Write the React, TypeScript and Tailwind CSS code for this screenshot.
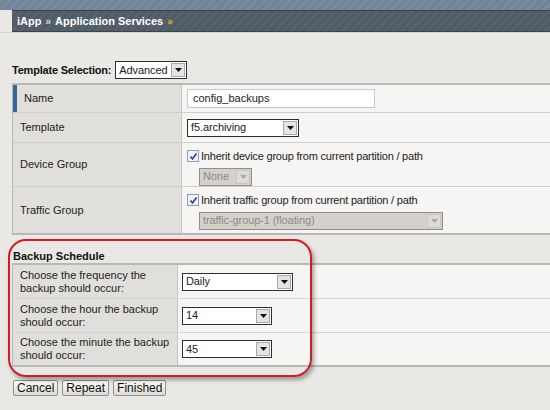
import React from "react";

const font = { fontFamily: '"Liberation Sans", Arial, sans-serif' };

function Arrow({ disabled }: { disabled?: boolean }) {
  return (
    <svg width="7" height="4" viewBox="0 0 7 4">
      <polygon points="0,0 7,0 3.5,4" fill={disabled ? "#a8a8a8" : "#111"} />
    </svg>
  );
}

function Select({
  value,
  w,
  disabled,
}: {
  value: string;
  w: string;
  disabled?: boolean;
}) {
  return (
    <div
      className={`flex h-[18px] items-stretch border ${
        disabled
          ? "border-[#8e8e8e] bg-[#d4d1cb] text-[#8a8a8a]"
          : "border-[#2e2e2e] bg-white text-[#222]"
      } ${w}`}
    >
      <div className="flex flex-1 items-center pl-[3px] text-[11px] leading-none tracking-[-0.1px]">
        {value}
      </div>
      <div
        className={`m-px flex w-[14px] items-center justify-center border ${
          disabled
            ? "border-[#c8c6c0] bg-[#dedbd5]"
            : "border-[#a8a8a8] bg-[#e4e4e4]"
        }`}
      >
        <Arrow disabled={disabled} />
      </div>
    </div>
  );
}

function Check({ label }: { label: string }) {
  return (
    <div className="flex items-center gap-[2px] text-[11px] tracking-[-0.2px] text-[#222]">
      <div className="flex h-[12px] w-[12px] items-center justify-center border border-[#8d9fb5] bg-[#eef1f6]">
        <svg width="9" height="9" viewBox="0 0 9 9">
          <path d="M1.5 4.5 L3.5 7 L7.5 1.5" stroke="#2a3f9a" strokeWidth="1.6" fill="none" />
        </svg>
      </div>
      <span>{label}</span>
    </div>
  );
}

function Btn({ label }: { label: string }) {
  return (
    <div className="flex h-[16px] items-center rounded-[2px] border border-[#8f8f8f] bg-gradient-to-b from-[#fbfbfa] to-[#dcdbd6] px-[3px] text-[12px] leading-none text-[#111]">
      {label}
    </div>
  );
}

export default function App() {
  return (
    <div className="relative h-[410px] w-[550px] overflow-hidden bg-[#e9e8e4]" style={font}>
      {/* header */}
      <div className="h-[10px] bg-[#76869a] bg-[repeating-linear-gradient(135deg,#7a8a9e_0px,#7a8a9e_3px,#72829a_3px,#72829a_6px)]" />
      <div className="ml-[12px] flex h-[22px] items-center gap-[4px] border-y border-[#3b434b] bg-[#535e6b] bg-[repeating-linear-gradient(135deg,#56616e_0px,#56616e_3px,#505b68_3px,#505b68_6px)] pl-[5px] text-[11px] font-bold text-white">
        <span>iApp</span>
        <span className="text-[10px] text-[#d8dce0]">»</span>
        <span>Application Services</span>
        <span className="text-[10px] text-[#e0b000]">»</span>
      </div>
      <div className="h-px bg-[#d4d2cc]" />

      {/* template selection */}
      <div className="mt-[28px] flex items-center gap-[4px] pl-[12px]">
        <span className="text-[11px] font-bold tracking-[-0.2px] text-[#111]">Template Selection:</span>
        <Select value="Advanced" w="w-[72px]" />
      </div>

      {/* main table */}
      <div className="ml-[12px] mt-[4px] border-y-2 border-l border-[#b8b8b5]">
        <div className="flex h-[28px] border-b border-[#cfcecb]">
          <div className="flex w-[168px] items-center border-l-[4px] border-[#37669c] bg-[#e0dfdb] pl-[7px] text-[11px] text-[#222]">
            Name
          </div>
          <div className="flex flex-1 items-center border-l border-[#c6c5c1] bg-[#f6f5f3] pl-[5px]">
            <div className="flex h-[19px] w-[188px] items-center border border-[#c9c9c9] bg-white pl-[5px] text-[11px] text-[#222]">
              config_backups
            </div>
          </div>
        </div>
        <div className="flex h-[30px] border-b border-[#cfcecb]">
          <div className="flex w-[168px] items-center bg-[#e0dfdb] pl-[7px] text-[11px] text-[#222]">
            Template
          </div>
          <div className="flex flex-1 items-center border-l border-[#c6c5c1] bg-[#f6f5f3] pl-[5px]">
            <Select value="f5.archiving" w="w-[112px]" />
          </div>
        </div>
        <div className="flex h-[44px] border-b border-[#cfcecb]">
          <div className="flex w-[168px] items-center bg-[#e0dfdb] pl-[7px] text-[11px] text-[#222]">
            Device Group
          </div>
          <div className="flex flex-1 flex-col gap-[3px] border-l border-[#c6c5c1] bg-[#f6f5f3] pl-[5px] pt-[5px]">
            <Check label="Inherit device group from current partition / path" />
            <div className="pl-[12px]">
              <Select value="None" w="w-[53px]" disabled />
            </div>
          </div>
        </div>
        <div className="flex h-[46px]">
          <div className="flex w-[168px] items-center bg-[#e0dfdb] pl-[7px] text-[11px] text-[#222]">
            Traffic Group
          </div>
          <div className="flex flex-1 flex-col gap-[3px] border-l border-[#c6c5c1] bg-[#f6f5f3] pl-[5px] pt-[5px]">
            <Check label="Inherit traffic group from current partition / path" />
            <div className="pl-[12px]">
              <Select value="traffic-group-1 (floating)" w="w-[244px]" disabled />
            </div>
          </div>
        </div>
      </div>

      {/* backup schedule */}
      <div className="mt-[14px] pl-[13px] text-[11px] font-bold leading-[14px] text-[#111]">
        Backup Schedule
      </div>
      <div className="ml-[12px] border-y-2 border-l border-[#b8b8b5]">
        {[
          ["Choose the frequency the", "backup should occur:", "Daily", "w-[111px]", "h-[34px]"],
          ["Choose the hour the backup", "should occur:", "14", "w-[90px]", "h-[34px]"],
          ["Choose the minute the backup", "should occur:", "45", "w-[90px]", "h-[32px]"],
        ].map(([a, b, v, w, h], i) => (
          <div key={i} className={`flex ${h} ${i < 2 ? "border-b border-[#d6d5d2]" : ""}`}>
            <div className="flex w-[164px] flex-col justify-center whitespace-nowrap bg-[#e0dfdb] pl-[7px] text-[11px] leading-[13px] text-[#222]">
              <span>{a}</span>
              <span>{b}</span>
            </div>
            <div className="flex flex-1 items-center border-l border-[#c6c5c1] bg-[#f6f5f3] pl-[4px]">
              <Select value={v} w={w} />
            </div>
          </div>
        ))}
      </div>

      {/* buttons */}
      <div className="mt-[13px] flex gap-[4px] pl-[13px]">
        <Btn label="Cancel" />
        <Btn label="Repeat" />
        <Btn label="Finished" />
      </div>

      {/* red annotation */}
      <div className="pointer-events-none absolute left-[8px] top-[239px] h-[138px] w-[304px] rounded-[18px] border-2 border-[#cc1f2b] shadow-[2px_3px_4px_rgba(0,0,0,0.35)]" />
    </div>
  );
}
